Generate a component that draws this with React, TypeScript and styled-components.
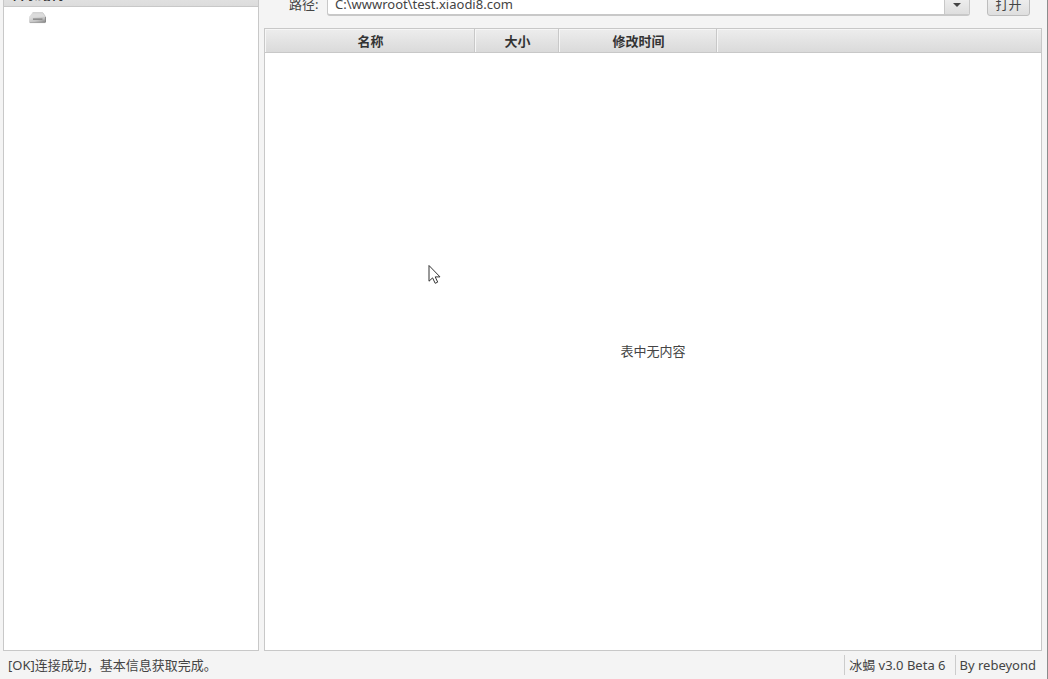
import React from "react";
import styled, { createGlobalStyle } from "styled-components";

const Global = createGlobalStyle`
  * { box-sizing: border-box; }
  html, body { margin: 0; }
  body, button, input {
    font-family: "Noto Sans", "Noto Sans CJK SC", sans-serif;
    font-size: 13px;
    color: #444;
  }
`;

const edge = "#c8c8c8";

const Window = styled.div`
  display: flex;
  flex-direction: column;
  height: 100vh;
  overflow: hidden;
  background: #f4f4f4;
  border-right: 1px solid #8c8c8c;
`;

const Workspace = styled.main`
  flex: 1;
  min-height: 0;
  display: grid;
  grid-template-columns: 256px minmax(0, 1fr);
  gap: 5px;
  padding: 0 5px 0 3px;
`;

const TreePanel = styled.section`
  display: flex;
  flex-direction: column;
  background: #fff;
  border: 1px solid ${edge};
  border-top: 0;
`;

const ScrolledRow = styled.div<{ $height: number }>`
  display: flex;
  align-items: flex-end;
  flex: none;
  height: ${(p) => p.$height}px;
  overflow: hidden;
`;

const TreeTitle = styled.h2`
  flex: 1;
  margin: 0;
  height: 24px;
  padding-left: 8px;
  font-size: 13px;
  line-height: 22px;
  color: #333;
  background: linear-gradient(#ececec, #dcdcdc);
  border-bottom: 1px solid ${edge};
`;

const Tree = styled.ul`
  margin: 0;
  padding: 5px 25px;
  list-style: none;
`;

const TreeItem = styled.li`
  display: flex;
  height: 13px;
`;

const FilePanel = styled.section`
  display: flex;
  flex-direction: column;
  min-width: 0;
`;

const PathBar = styled.form`
  flex: 1;
  display: flex;
  align-items: center;
  height: 24px;
  padding: 0 12px 0 25px;
`;

const PathLabel = styled.label`
  width: 38px;
  line-height: 20px;
`;

const Combo = styled.div`
  flex: 1;
  display: flex;
  height: 24px;
  margin-right: 17px;
  background: #fff;
  border: 1px solid ${edge};
  border-bottom-width: 2px;
  border-radius: 3px;
  overflow: hidden;
`;

const PathInput = styled.input`
  flex: 1;
  min-width: 0;
  padding: 0 7px;
  border: 0;
  outline: 0;
  background: transparent;
`;

const ComboArrow = styled.button`
  display: flex;
  align-items: center;
  justify-content: center;
  width: 25px;
  padding: 2px 0 0;
  border: 0;
  border-left: 1px solid ${edge};
  background: linear-gradient(#f4f4f4, #dedede);
`;

const OpenButton = styled.button`
  width: 43px;
  height: 24px;
  padding: 0;
  line-height: 20px;
  border: 1px solid #bdbdbd;
  border-radius: 3px;
  background: linear-gradient(#f4f4f4, #dedede);
`;

const TableFrame = styled.div`
  flex: 1;
  min-height: 0;
  margin-top: 12px;
  border: 1px solid ${edge};
  background: #fff;
`;

const FileTable = styled.table`
  width: 100%;
  height: 100%;
  table-layout: fixed;
  border-collapse: separate;
  border-spacing: 0;
`;

const HeaderCell = styled.th<{ $width?: number }>`
  width: ${(p) => (p.$width ? `${p.$width}px` : "auto")};
  height: 24px;
  padding: 0 0 0 2px;
  line-height: 20px;
  color: #333;
  background: linear-gradient(#ededed, #dadada);
  border-bottom: 1px solid ${edge};
  border-right: ${(p) => (p.$width ? `1px solid ${edge}` : "0")};
  box-shadow: inset 1px 1px 0 #f6f6f6;
`;

const EmptyCell = styled.td`
  padding: 0 0 2px;
  text-align: center;
  vertical-align: middle;
`;

const StatusBar = styled.footer`
  flex: none;
  display: flex;
  align-items: center;
  height: 28px;
  padding: 0 11px 0 8px;
  line-height: 20px;
`;

const StatusText = styled.span`
  flex: 1;
`;

const StatusItem = styled.span`
  margin-left: 9px;
  padding-left: 4px;
  border-left: 1px solid #ccc;
`;

const DriveIcon = () => (
  <svg width="18" height="13" viewBox="0 0 18 13" role="img" aria-label="磁盘">
    <defs>
      <linearGradient id="drive" x1="0" y1="0" x2="1" y2="1">
        <stop offset="0" stopColor="#e2e2e2" />
        <stop offset="0.55" stopColor="#c4c4c4" />
        <stop offset="1" stopColor="#7c7c7c" />
      </linearGradient>
    </defs>
    <path d="M3.6 0.4h10.2l3 4.4v5q0 1-1 1H1.200q-1 0-1-1v-5z" fill="#dcdcdc" />
    <path d="M0.200 4.800h16.600v5q0 1-1 1H1.200q-1 0-1-1z" fill="url(#drive)" />
    <path d="M3.600 0.700h10.200l2.700 4" fill="none" stroke="#c0c0c0" strokeWidth="0.700" />
    <path d="M0.800 10.600h15.500" stroke="#9a9a9a" strokeWidth="0.700" />
    <path d="M4 6.400h9.500v1.500H4z" fill="#888" />
    <path d="M16.500 5v5" stroke="#808080" strokeWidth="0.800" />
  </svg>
);

const Cursor = styled.svg`
  position: absolute;
  left: 428px;
  top: 264px;
  pointer-events: none;
`;

const columns = [
  { name: "名称", width: 210 },
  { name: "大小", width: 84 },
  { name: "修改时间", width: 158 },
  { name: "" },
];

export default function App() {
  return (
    <>
      <Global />
      <Window>
        <Workspace>
          <TreePanel>
            <ScrolledRow $height={7}>
              <TreeTitle>目录结构</TreeTitle>
            </ScrolledRow>
            <Tree>
              <TreeItem>
                <DriveIcon />
              </TreeItem>
            </Tree>
          </TreePanel>
          <FilePanel>
            <ScrolledRow $height={16}>
              <PathBar onSubmit={(e) => e.preventDefault()}>
                <PathLabel htmlFor="path">路径:</PathLabel>
                <Combo>
                  <PathInput id="path" defaultValue="C:\wwwroot\test.xiaodi8.com" />
                  <ComboArrow type="button" aria-label="选择路径">
                    <svg width="8" height="4" viewBox="0 0 8 4">
                      <path d="M0 0h8L4 4z" fill="#444" />
                    </svg>
                  </ComboArrow>
                </Combo>
                <OpenButton type="submit">打开</OpenButton>
              </PathBar>
            </ScrolledRow>
            <TableFrame>
              <FileTable>
                <thead>
                  <tr>
                    {columns.map((c) => (
                      <HeaderCell key={c.name} $width={c.width}>
                        {c.name}
                      </HeaderCell>
                    ))}
                  </tr>
                </thead>
                <tbody>
                  <tr>
                    <EmptyCell colSpan={4}>表中无内容</EmptyCell>
                  </tr>
                </tbody>
              </FileTable>
            </TableFrame>
          </FilePanel>
        </Workspace>
        <StatusBar>
          <StatusText>[OK]连接成功，基本信息获取完成。</StatusText>
          <StatusItem>冰蝎 v3.0 Beta 6</StatusItem>
          <StatusItem>By rebeyond</StatusItem>
        </StatusBar>
      </Window>
      <Cursor width="13" height="21" viewBox="0 0 13 21" aria-hidden="true">
        <path
          d="M1 1.500V17.200L4.600 13.900L7.200 19.300L9.700 18.100L7.200 12.900H12z"
          fill="#fff"
          stroke="#333"
          strokeWidth="1"
        />
      </Cursor>
    </>
  );
}
